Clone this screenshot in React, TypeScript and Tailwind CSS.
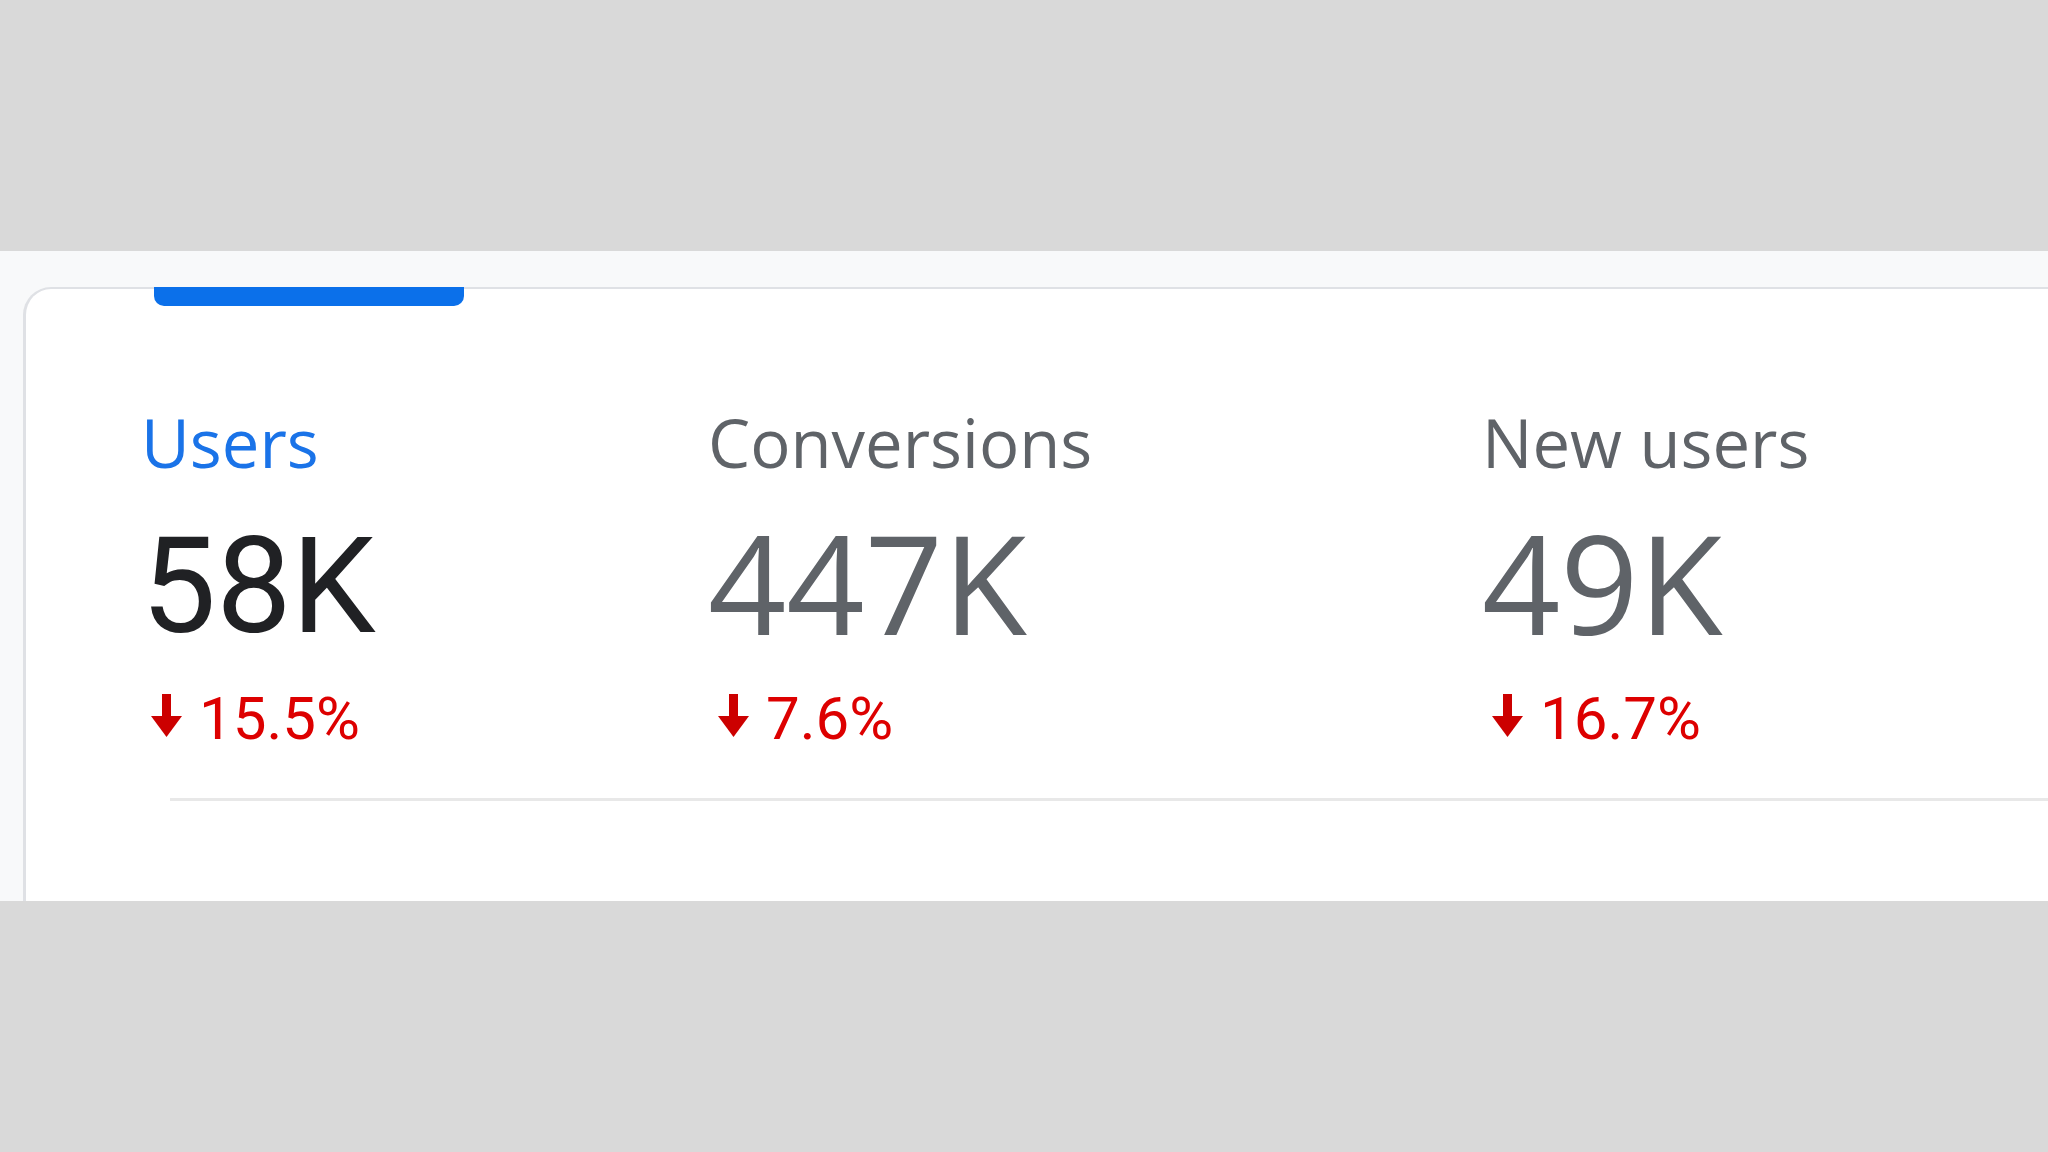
import React from "react";

function DownArrow() {
  return (
    <svg viewBox="0 0 33 43" className="w-[33px] h-[43px] mt-[5px] ml-[9px] shrink-0" aria-hidden="true">
      <rect x="12" y="0" width="9" height="26" fill="#cc0000" />
      <polygon points="1,22 32,22 16.5,43" fill="#cc0000" />
    </svg>
  );
}

type Metric = {
  label: string;
  value: string;
  change: string;
  active?: boolean;
  width: string;
};

export default function App() {
  const metrics: Metric[] = [
    { label: "Users", value: "58K", change: "15.5%", active: true, width: "w-[567px]" },
    { label: "Conversions", value: "447K", change: "7.6%", width: "w-[774px]" },
    { label: "New users", value: "49K", change: "16.7%", width: "w-[500px]" },
  ];

  return (
    <div className="w-[2048px] h-[1152px] bg-[#d9d9d9] flex flex-col overflow-hidden">
      <div className="h-[251px] shrink-0" />
      <div className="h-[650px] shrink-0 bg-[#f8f9fa] pt-[36px] pl-[23px] overflow-hidden">
        <div className="h-full bg-white border-t-2 border-l-[3px] border-[#dfe1e5] rounded-tl-[28px] flex flex-col">
          <div className="ml-[128px] w-[310px] h-[19px] -mt-[2px] bg-[#0b70ea] rounded-b-[10px] shrink-0" />
          <div className="flex pl-[115px] mt-[103px]">
            {metrics.map((m) => (
              <div key={m.label} className={`${m.width} shrink-0 flex flex-col`}>
                <div
                  className={`text-[67px] leading-none font-medium whitespace-nowrap ${
                    m.active ? "text-[#1a73e8]" : "text-[#5f6368]"
                  }`}
                  style={{ fontFamily: '"Open Sans", sans-serif' }}
                >
                  {m.label}
                </div>
                {m.active ? (
                  <div
                    className="mt-[44px] text-[134px] leading-none text-[#202124] whitespace-nowrap"
                    style={{ fontFamily: "Roboto, sans-serif" }}
                  >
                    {m.value}
                  </div>
                ) : (
                  <div
                    className="mt-[38px] text-[137px] leading-none text-[#5f6368] whitespace-nowrap"
                    style={{ fontFamily: '"Open Sans", sans-serif' }}
                  >
                    {m.value}
                  </div>
                )}
                <div className={`flex items-start h-[60px] ${m.active ? "mt-[35px]" : "mt-[38px]"}`}>
                  <DownArrow />
                  <span
                    className="ml-[16px] text-[60px] leading-none text-[#dd0000] whitespace-nowrap"
                    style={{ fontFamily: "Roboto, sans-serif" }}
                  >
                    {m.change}
                  </span>
                </div>
              </div>
            ))}
          </div>
          <div className="ml-[144px] mt-[49px] h-[3px] bg-[#e8e8e8] shrink-0" />
        </div>
      </div>
      <div className="flex-1" />
    </div>
  );
}
